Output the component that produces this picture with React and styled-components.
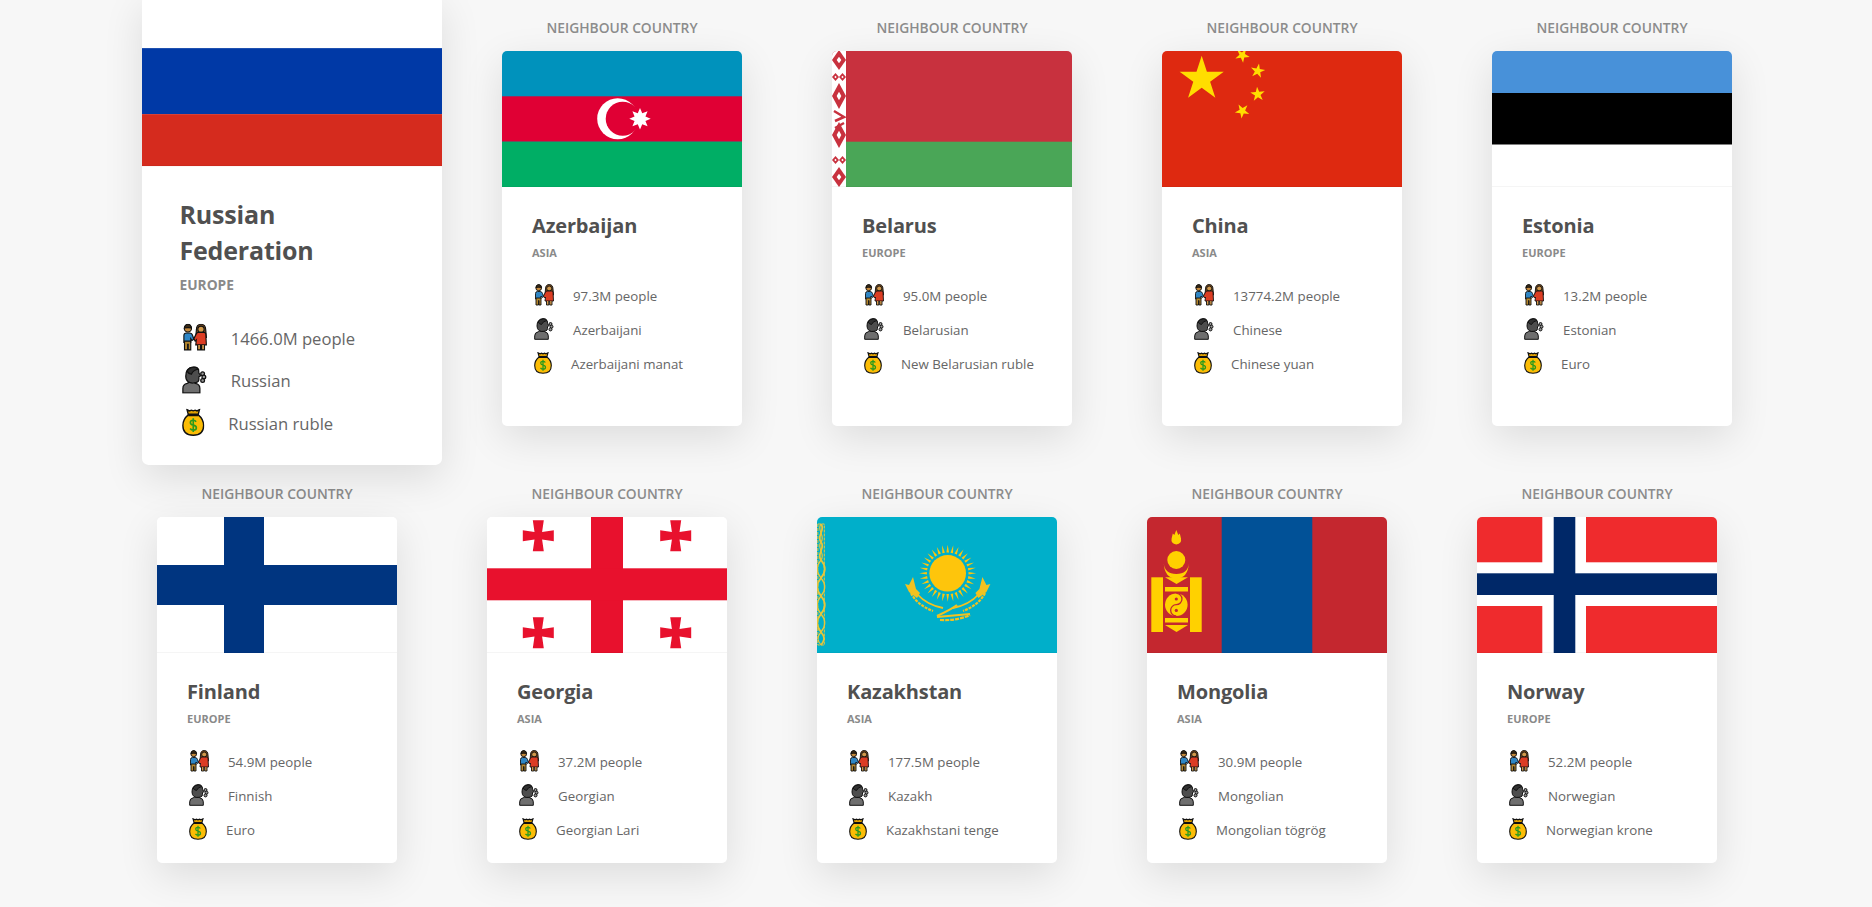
import React from "react";
import styled, { createGlobalStyle } from "styled-components";

const Global = createGlobalStyle`
  * { box-sizing: border-box; }
  html, body { margin: 0; background: #f7f7f7; }
  body { font-family: "Open Sans", "Noto Sans", "Liberation Sans", sans-serif; overflow: hidden; }
`;

const Page = styled.main`
  height: 907px;
  padding-top: 19px;
  display: flex;
  flex-direction: column;
  gap: 59px;
`;
const Row = styled.section`
  display: flex;
  align-items: stretch;
  gap: 90px;
  padding-left: ${(p) => p.$indent}px;
`;
const Column = styled.div`
  width: 240px;
  display: flex;
  flex-direction: column;
`;
const Label = styled.div`
  height: 18px;
  margin-bottom: 14px;
  font-size: 13.8px;
  line-height: 18px;
  font-weight: 600;
  color: #8c8c8c;
  text-align: center;
  white-space: nowrap;
`;
const Card = styled.article`
  flex: 1;
  background: #fff;
  border-radius: 5px;
  overflow: hidden;
  box-shadow: 0 12px 40px rgba(0, 0, 0, 0.11);
`;
const MainCard = styled(Card)`
  margin: 24px 0 8px;
  transform: scale(1.25);
  box-shadow: 0 10px 32px rgba(0, 0, 0, 0.11);
`;
const FlagSvg = styled.svg`
  display: block;
  width: 240px;
  height: 136px;
`;
const Body = styled.div`
  padding: 24px 30px 16px;
  border-top: 1px solid rgba(0, 0, 0, 0.04);
  margin-top: -1px;
  position: relative;
`;
const Title = styled.h2`
  margin: 0;
  font-size: 20px;
  line-height: 29px;
  font-weight: 700;
  color: #505050;
  letter-spacing: -0.15px;
`;
const Region = styled.div`
  margin: 6px 0 19px;
  font-size: 11px;
  line-height: 14px;
  font-weight: 700;
  color: #8a8a8a;
  text-transform: uppercase;
`;
const Fact = styled.div`
  height: 34px;
  margin-left: 2px;
  display: flex;
  align-items: center;
  gap: 19px;
  font-size: 13.3px;
  color: #666;
  white-space: nowrap;
`;
const IconSvg = styled.svg`
  flex: none;
  display: block;
  margin-top: -3px;
`;

const People = () => (
  <IconSvg width="20" height="22" viewBox="0 0 20 22" stroke="#111" strokeWidth="0.9">
    <path d="M1.500 15V9.500q0-2 2-2h2.500q2 0 2.500 2l1 3-1.500 1-1-1.500V15Z" fill="#2f86c5" />
    <path d="M2 14h5v7H5V16.500H4.500V21H2Z" fill="#b4862e" />
    <circle cx="4.700" cy="3.800" r="2.900" fill="#c68a3c" />
    <path d="M2 3.500q.5-3 2.700-3 2.500 0 2.800 3-2.500-.5-5.500 0Z" fill="#3a2a15" />
    <path d="M11.500 5q0-4.500 3.700-4.500T19 5l.5 6h-8.500Z" fill="#7a4a1a" />
    <circle cx="15.200" cy="4.500" r="2.500" fill="#d29a4c" />
    <path d="M9.500 12l2-4q.5-1 1.500-1h4.500q1 0 1.500 1l.5 9h-8.500l.5-4-1 1Z" fill="#dc3d24" />
    <path d="M12.500 17v4h2.300V17M15.700 17v4H18V17" fill="#d29a4c" />
  </IconSvg>
);
const Speaker = () => (
  <IconSvg width="20" height="22" viewBox="0 0 20 22" stroke="#111" strokeWidth="1">
    <path d="M.7 21.300v-3.500q0-3.300 3.500-4l1.300-.8h4l1.300.8q3.500.7 3.500 4v3.500Z" fill="#6f6f6f" />
    <path d="M3 8q0-7 6-7.300 3-.2 4.300 2.300l.2 2.500 1.500 2.200-1.500.8v2q0 2-2 2.500l-1.500.3Q7 14 5 12.500 3 11 3 8Z" fill="#4d4d4d" />
    <path d="M4 4Q6 .8 9.500.8q2.500 0 3.500 1.700Q9 3 7.500 6.500Q5 6 4 4Z" fill="#2f2f2f" />
    <circle cx="16.500" cy="6" r="1.500" fill="#999" />
    <circle cx="17.500" cy="8.700" r="1.500" fill="#999" />
    <circle cx="16.500" cy="11.400" r="1.500" fill="#999" />
  </IconSvg>
);
const Money = () => (
  <IconSvg width="18" height="22" viewBox="0 0 18 22" stroke="#111" strokeWidth="1.100">
    <path d="M4 .8l2 1 1.500-.6 1.500.6 1.500-.6 1.500.6 2-1-1 3.700H5Z" fill="#e0a000" />
    <path d="M5 5Q.7 8.500.7 13.500q0 7.800 8.300 7.800t8.300-7.800Q17.300 8.500 13 5Z" fill="#fbbc05" />
    <path d="M5 5.200h8" strokeWidth="1.800" />
    <path d="M11.300 10.500q-.8-1.200-2.300-1.200-2.300 0-2.300 1.800 0 1.600 2.300 2.100 2.500.5 2.500 2.200 0 1.800-2.500 1.800-1.600 0-2.500-1.300M9 7.700v11" fill="none" stroke="#2b9a1e" strokeWidth="1.300" />
  </IconSvg>
);

const starPoints = (cx, cy, R, rot = 0, inner = 0.382, n = 5) =>
  Array.from({ length: n * 2 }, (_, i) => {
    const r = i % 2 ? R * inner : R;
    const a = ((-90 + rot + (i * 180) / n) * Math.PI) / 180;
    return `${(cx + r * Math.cos(a)).toFixed(2)},${(cy + r * Math.sin(a)).toFixed(2)}`;
  }).join(" ");

const Flag = ({ children, bg = "#fff" }) => (
  <FlagSvg viewBox="0 0 240 136" preserveAspectRatio="none">
    <rect width="240" height="136" fill={bg} />
    {children}
  </FlagSvg>
);

const Russia = () => (
  <Flag>
    <rect y="41.600" width="240" height="52.800" fill="#0039a6" />
    <rect y="94.400" width="240" height="41.600" fill="#d52b1e" />
  </Flag>
);
const Azerbaijan = () => (
  <Flag bg="#0092bc">
    <rect y="45.300" width="240" height="45.400" fill="#e00034" />
    <rect y="90.700" width="240" height="45.300" fill="#00ae65" />
    <circle cx="115.700" cy="67.700" r="20.500" fill="#fff" />
    <circle cx="120.700" cy="67.700" r="17" fill="#e00034" />
    <polygon points={starPoints(138, 67.700, 10.700, 0, 0.55, 8)} fill="#fff" />
  </Flag>
);
const BelarusBand = () => {
  const diamonds = [
    [7, 9, 7, 10], [3.500, 26, 3.500, 4], [10.500, 26, 3.500, 4], [7, 45, 7, 13],
    [7, 84, 7, 13], [3.500, 109, 3.500, 4], [10.500, 109, 3.500, 4], [7, 126, 7, 10],
  ];
  return (
    <>
      <rect width="14" height="136" fill="#fff" />
      {diamonds.map(([x, y, w, h], i) => (
        <g key={i}>
          <polygon points={`${x},${y - h} ${x + w},${y} ${x},${y + h} ${x - w},${y}`} fill="#c8313e" />
          <polygon points={`${x},${y - h / 3} ${x + w / 3},${y} ${x},${y + h / 3} ${x - w / 3},${y}`} fill="#fff" />
        </g>
      ))}
      <path d="M2 60 L12 66 L3 70 M12 72 L3 77" stroke="#c8313e" strokeWidth="2.500" fill="none" />
    </>
  );
};
const Belarus = () => (
  <Flag bg="#c8313e">
    <rect y="90.700" width="240" height="45.300" fill="#4aa657" />
    <BelarusBand />
  </Flag>
);
const China = () => (
  <Flag bg="#de2910">
    <polygon points={starPoints(39.700, 27.900, 23.200)} fill="#ffde00" />
    <polygon points={starPoints(80.300, 4.300, 7.600, 30)} fill="#ffde00" />
    <polygon points={starPoints(95.700, 20, 7.600, 10)} fill="#ffde00" />
    <polygon points={starPoints(95.700, 43.300, 7.600, -5)} fill="#ffde00" />
    <polygon points={starPoints(80.300, 60, 7.600, -30)} fill="#ffde00" />
  </Flag>
);
const Estonia = () => (
  <Flag>
    <rect width="240" height="42" fill="#4891d9" />
    <rect y="42" width="240" height="51.500" fill="#000" />
  </Flag>
);
const Finland = () => (
  <Flag>
    <rect x="67" width="40" height="136" fill="#003580" />
    <rect y="48" width="240" height="40" fill="#003580" />
  </Flag>
);
const Bolnisi = ({ x, y }) => (
  <path
    transform={`translate(${x} ${y})`}
    d="M-5.500-15.500h11L3.800-3.800 15.500-5.500v11L3.800 3.800 5.500 15.500h-11L-3.800 3.800-15.500 5.500v-11L-3.800-3.800Z"
    fill="#e8112d"
  />
);
const Georgia = () => (
  <Flag>
    <rect x="104" width="32" height="136" fill="#e8112d" />
    <rect y="51.300" width="240" height="32" fill="#e8112d" />
    <Bolnisi x={51.300} y={18.700} />
    <Bolnisi x={188.700} y={18.700} />
    <Bolnisi x={51.300} y={115.700} />
    <Bolnisi x={188.700} y={115.700} />
  </Flag>
);
const Kazakhstan = () => (
  <Flag bg="#00afca">
    <g stroke="#e8c53a" fill="none">
      <rect x=".8" y="7" width="6.500" height="121" strokeWidth="1" strokeDasharray="3 1" />
      <path d="M4 7 C9 13 -1 19 4 25 S-1 37 4 43 S9 55 4 61 S-1 73 4 79 S9 91 4 97 S-1 109 4 115 S7 124 4 128" strokeWidth="1.800" />
      <path d="M4 7 C-1 13 9 19 4 25 S9 37 4 43 S-1 55 4 61 S9 73 4 79 S-1 91 4 97 S9 109 4 115 S1 124 4 128" strokeWidth="1.200" />
    </g>
    <circle cx="130.700" cy="56.300" r="18.300" fill="#fec50c" />
    {Array.from({ length: 32 }, (_, i) => (
      <polygon
        key={i}
        points="129.400,35.500 130.700,27.800 132,35.500"
        fill="#fec50c"
        transform={`rotate(${i * 11.250} 130.700 56.300)`}
      />
    ))}
    <g fill="#f2c21f">
      <path d="M96 60L99 72L103 76L100 81L92 75L88 67L92 68Z" />
      <path d="M165.400 60L162.400 72L158.400 76L161.400 81L169.400 75L173.400 67L169.400 68Z" />
    </g>
    <g fill="none" stroke="#f2c21f">
      <path d="M100 77Q110 88 126 91" strokeWidth="1.800" />
      <path d="M162 77Q152 88 136 91" strokeWidth="1.800" />
      <path d="M94 76Q100 88 116 94" strokeWidth="2.200" strokeDasharray="3 1" />
      <path d="M168 76Q162 88 146 94" strokeWidth="2.200" strokeDasharray="3 1" />
      <path d="M120 99Q135 92 140 88" strokeWidth="2.200" />
      <path d="M120 100L153 97" strokeWidth="2.200" />
      <path d="M123 103Q140 104 153 98" strokeWidth="2.200" strokeDasharray="4 1" />
    </g>
  </Flag>
);
const Mongolia = () => (
  <Flag bg="#c4272f">
    <rect x="74.700" width="90.600" height="136" fill="#015197" />
    <g fill="#ffd100">
      <path d="M29.300 13l2 5 1.500-1.500 1.200 5q1 5-4.700 6-5.700-1-4.700-6l1.200-5 1.500 1.500Z" />
      <circle cx="29.300" cy="43" r="9" />
      <path d="M16.700 46q1 15.500 12.600 15.500T41.900 46q-1 11-12.600 11T16.700 46Z" />
      <rect x="4.300" y="60.300" width="11.700" height="54.700" />
      <rect x="43" y="60.300" width="11.700" height="54.700" />
      <polygon points="18,60.300 41,60.300 29.500,67" />
      <rect x="18" y="70" width="23" height="4.500" />
      <circle cx="29.300" cy="87.700" r="11.300" />
      <rect x="18" y="101" width="23" height="4.500" />
      <polygon points="18,108 41,108 29.500,115" />
    </g>
    <path d="M29.300 76.400a5.650 5.650 0 0 1 0 11.300a5.650 5.650 0 0 0 0 11.300" fill="none" stroke="#c4272f" strokeWidth="1.300" />
    <circle cx="29.300" cy="82" r="1.600" fill="#c4272f" />
    <circle cx="29.300" cy="93.400" r="1.600" fill="#c4272f" />
  </Flag>
);
const Norway = () => (
  <Flag bg="#ef2b2d">
    <rect x="65.300" width="43.700" height="136" fill="#fff" />
    <rect y="45.300" width="240" height="43.700" fill="#fff" />
    <rect x="76.700" width="21.600" height="136" fill="#002868" />
    <rect y="56.300" width="240" height="21.700" fill="#002868" />
  </Flag>
);

const firstRow = [
  { name: "Azerbaijan", region: "Asia", people: "97.3M", lang: "Azerbaijani", money: "Azerbaijani manat", flag: Azerbaijan },
  { name: "Belarus", region: "Europe", people: "95.0M", lang: "Belarusian", money: "New Belarusian ruble", flag: Belarus },
  { name: "China", region: "Asia", people: "13774.2M", lang: "Chinese", money: "Chinese yuan", flag: China },
  { name: "Estonia", region: "Europe", people: "13.2M", lang: "Estonian", money: "Euro", flag: Estonia },
];
const secondRow = [
  { name: "Finland", region: "Europe", people: "54.9M", lang: "Finnish", money: "Euro", flag: Finland },
  { name: "Georgia", region: "Asia", people: "37.2M", lang: "Georgian", money: "Georgian Lari", flag: Georgia },
  { name: "Kazakhstan", region: "Asia", people: "177.5M", lang: "Kazakh", money: "Kazakhstani tenge", flag: Kazakhstan },
  { name: "Mongolia", region: "Asia", people: "30.9M", lang: "Mongolian", money: "Mongolian tögrög", flag: Mongolia },
  { name: "Norway", region: "Europe", people: "52.2M", lang: "Norwegian", money: "Norwegian krone", flag: Norway },
];

const Content = ({ c }) => {
  const FlagImage = c.flag;
  return (
    <>
      <FlagImage />
      <Body>
        <Title>{c.name}</Title>
        <Region>{c.region}</Region>
        <Fact><People /><span>{c.people} people</span></Fact>
        <Fact><Speaker /><span>{c.lang}</span></Fact>
        <Fact><Money /><span>{c.money}</span></Fact>
      </Body>
    </>
  );
};

const Neighbour = ({ c }) => (
  <Column>
    <Label>NEIGHBOUR COUNTRY</Label>
    <Card><Content c={c} /></Card>
  </Column>
);

export default function App() {
  const russia = { name: "Russian Federation", region: "Europe", people: "1466.0M", lang: "Russian", money: "Russian ruble", flag: Russia };
  return (
    <>
      <Global />
      <Page>
        <Row $indent={172}>
          <Column>
            <MainCard><Content c={russia} /></MainCard>
          </Column>
          {firstRow.map((c) => <Neighbour key={c.name} c={c} />)}
        </Row>
        <Row $indent={157}>
          {secondRow.map((c) => <Neighbour key={c.name} c={c} />)}
        </Row>
      </Page>
    </>
  );
}
